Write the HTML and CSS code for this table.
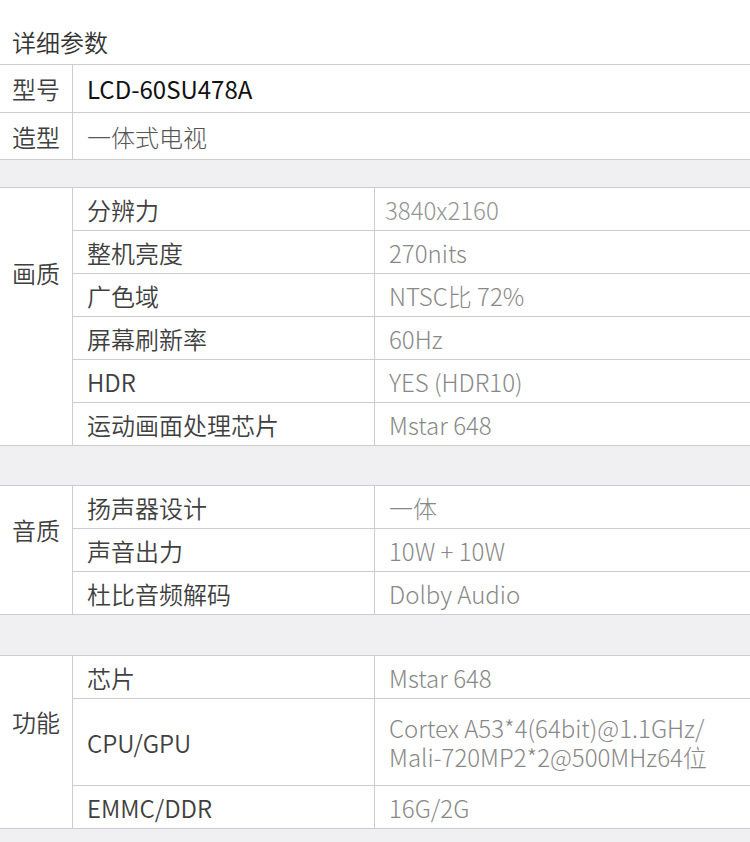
FILE: index.html
```html
<!DOCTYPE html>
<html lang="zh-CN">
<head>
<meta charset="utf-8">
<title>详细参数</title>
<link rel="stylesheet" href="styles.css">
</head>
<body>
<div class="page">
  <div class="title">详细参数</div>

  <div class="row row--h47">
    <div class="cell-key">型号</div>
    <div class="cell-wide cell-wide--strong">LCD-60SU478A</div>
  </div>
  <div class="row row--h46">
    <div class="cell-key">造型</div>
    <div class="cell-wide">一体式电视</div>
  </div>

  <div class="gap gap--27"></div>

  <div class="group">
    <div class="group-label group-label--pic">画质</div>
    <div class="group-rows">
      <div class="sub"><div class="sub-key">分辨力</div><div class="sub-val sub-val--shift">3840x2160</div></div>
      <div class="sub"><div class="sub-key">整机亮度</div><div class="sub-val">270nits</div></div>
      <div class="sub"><div class="sub-key">广色域</div><div class="sub-val">NTSC比 72%</div></div>
      <div class="sub"><div class="sub-key">屏幕刷新率</div><div class="sub-val">60Hz</div></div>
      <div class="sub"><div class="sub-key">HDR</div><div class="sub-val">YES (HDR10)</div></div>
      <div class="sub"><div class="sub-key">运动画面处理芯片</div><div class="sub-val">Mstar 648</div></div>
    </div>
  </div>

  <div class="gap gap--39"></div>

  <div class="group">
    <div class="group-label group-label--snd">音质</div>
    <div class="group-rows">
      <div class="sub"><div class="sub-key">扬声器设计</div><div class="sub-val">一体</div></div>
      <div class="sub"><div class="sub-key">声音出力</div><div class="sub-val">10W + 10W</div></div>
      <div class="sub"><div class="sub-key">杜比音频解码</div><div class="sub-val">Dolby Audio</div></div>
    </div>
  </div>

  <div class="gap gap--40"></div>

  <div class="group">
    <div class="group-label group-label--fn">功能</div>
    <div class="group-rows">
      <div class="sub"><div class="sub-key">芯片</div><div class="sub-val">Mstar 648</div></div>
      <div class="sub sub--tall"><div class="sub-key">CPU/GPU</div><div class="sub-val sub-val--multi">Cortex A53*4(64bit)@1.1GHz/<br>Mali-720MP2*2@500MHz64位</div></div>
      <div class="sub"><div class="sub-key">EMMC/DDR</div><div class="sub-val">16G/2G</div></div>
    </div>
  </div>

  <div class="footer-gap"></div>
</div>
</body>
</html>
```

FILE: styles.css
```css
html, body {
  margin: 0;
  padding: 0;
  background: #ffffff;
}

body {
  font-family: "Noto Sans CJK SC", "Noto Sans", sans-serif;
  font-size: 24px;
  font-weight: 300;
  color: #444444;
}

.page {
  width: 750px;
  overflow: hidden;
}

.title {
  box-sizing: border-box;
  height: 65px;
  padding: 27px 0 0 12px;
  line-height: 30px;
  color: #333333;
  font-weight: 350;
  border-bottom: 1px solid #cccccc;
}

.row {
  display: flex;
  border-bottom: 1px solid #cccccc;
}

.row--h47 { height: 47px; }
.row--h46 { height: 46px; }

.cell-key {
  box-sizing: border-box;
  width: 73px;
  flex: none;
  padding-left: 12px;
  border-right: 1px solid #cccccc;
  display: flex;
  align-items: center;
  color: #3f3f3f;
  font-weight: 350;
}

.cell-wide {
  flex: 1;
  padding-left: 14px;
  display: flex;
  align-items: center;
  color: #555555;
}

.cell-wide--strong {
  color: #111111;
  font-weight: 400;
}

.gap {
  background: #f0f0f2;
  border-bottom: 1px solid #cccccc;
}

.gap--27 { height: 27px; }
.gap--39 { height: 39px; }
.gap--40 { height: 40px; }

.group {
  display: flex;
}

.group-label {
  box-sizing: border-box;
  width: 73px;
  flex: none;
  padding-left: 12px;
  line-height: 30px;
  border-right: 1px solid #cccccc;
  border-bottom: 1px solid #cccccc;
  color: #3f3f3f;
  font-weight: 350;
}

.group-label--pic { padding-top: 70px; }
.group-label--snd { padding-top: 29px; }
.group-label--fn { padding-top: 51px; }

.group-rows {
  flex: 1;
  display: flex;
  flex-direction: column;
}

.sub {
  display: flex;
  height: 42px;
  border-bottom: 1px solid #cccccc;
}

.sub--tall {
  height: 86px;
}

.sub-key {
  box-sizing: border-box;
  width: 302px;
  flex: none;
  padding-left: 14px;
  border-right: 1px solid #cccccc;
  display: flex;
  align-items: center;
  color: #3f3f3f;
  font-weight: 350;
}

.sub-val {
  flex: 1;
  padding-left: 14px;
  display: flex;
  align-items: center;
  color: #888888;
}

.sub-val--shift {
  padding-left: 10px;
  color: #949494;
}

.sub-val--multi {
  line-height: 29px;
}

.footer-gap {
  height: 30px;
  background: #f0f0f2;
}
```
